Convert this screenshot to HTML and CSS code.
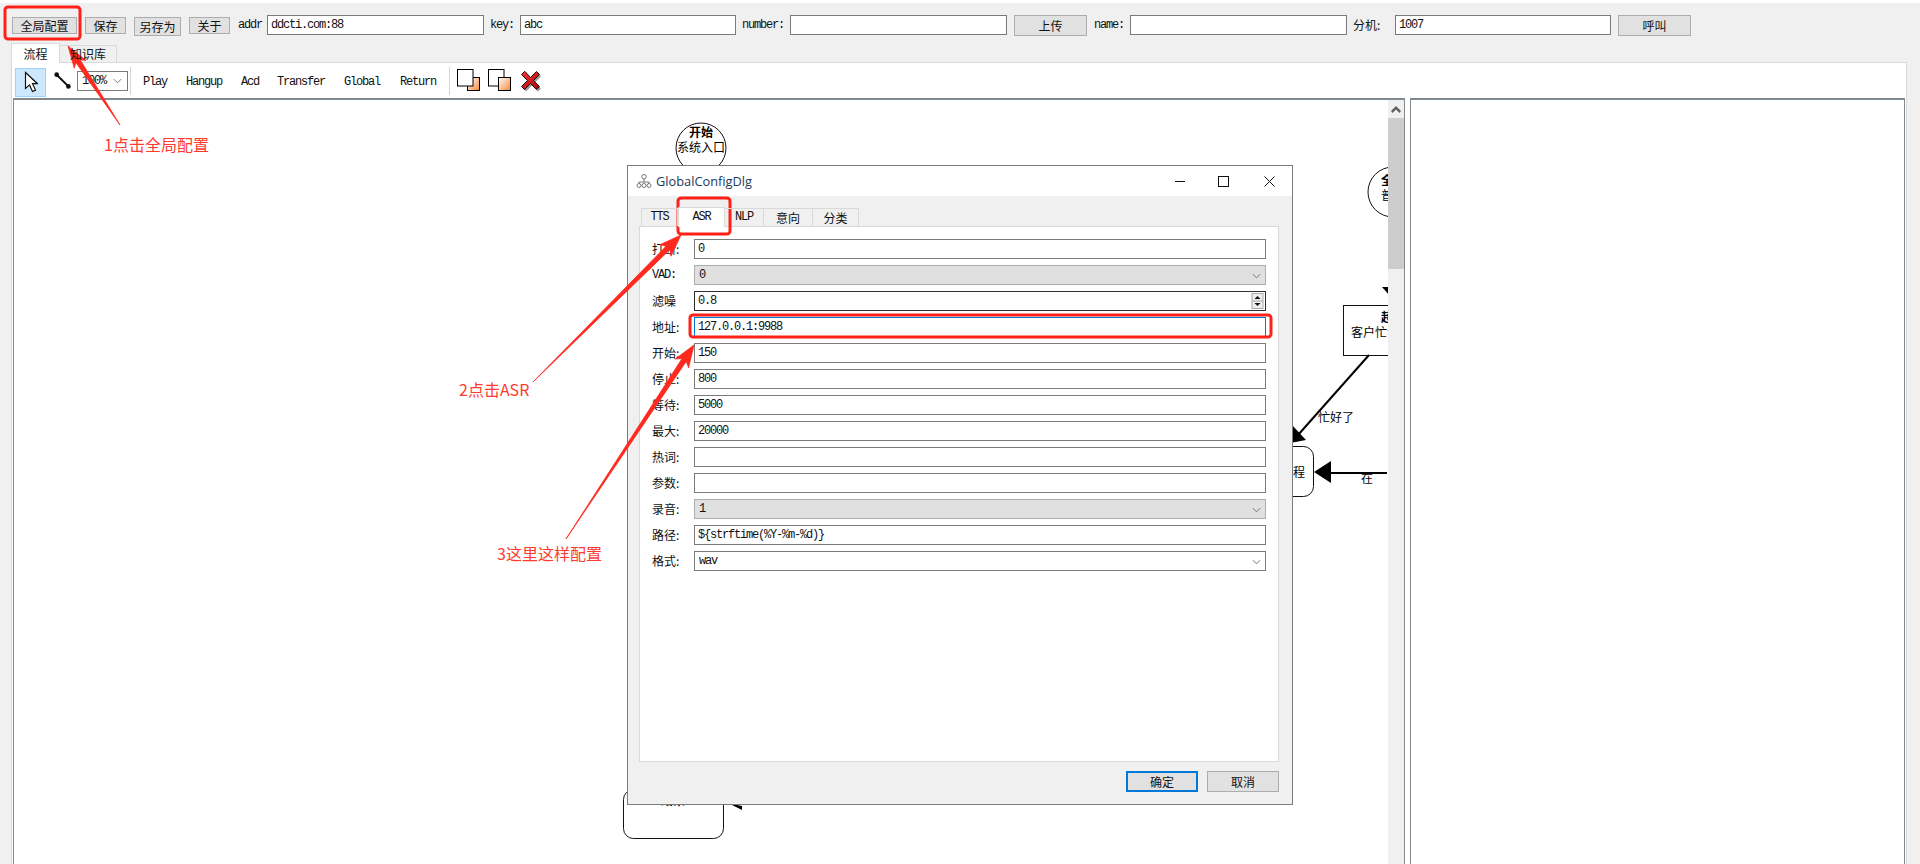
FILE: index.html
```html
<!DOCTYPE html>
<html lang="zh">
<head>
<meta charset="utf-8">
<title>GlobalConfigDlg</title>
<link rel="stylesheet" href="styles.css">
</head>
<body>
<div class="app">
  <div class="topbar">
    <button class="btn w-global">全局配置</button>
    <button class="btn w-save">保存</button>
    <button class="btn w-saveas">另存为</button>
    <button class="btn w-save">关于</button>
    <span class="lbl lat l-addr">addr</span>
    <div class="field w-addr lat">ddcti.com:88</div>
    <span class="lbl lat l-key">key:</span>
    <div class="field w-key lat">abc</div>
    <span class="lbl lat l-number">number:</span>
    <div class="field w-number"></div>
    <button class="btn btn-tall w-up">上传</button>
    <span class="lbl lat l-name">name:</span>
    <div class="field w-name"></div>
    <span class="lbl l-ext">分机:</span>
    <div class="field w-ext lat">1007</div>
    <button class="btn btn-tall w-up">呼叫</button>
  </div>
  <div class="tabs">
    <div class="tab tab-on">流程</div>
    <div class="tab tab-off">知识库</div>
  </div>
  <div class="panel">
    <div class="tools">
      <div class="tool-sel">
        <svg class="ico-cur" viewBox="0 0 14 22"><path d="M1.5 1.5v16l4-3.6 3 6.6 3-1.4-3-6.4h5z" fill="#fff" stroke="#111" stroke-width="1.2"/></svg>
      </div>
      <svg class="ico-conn" viewBox="0 0 20 20"><path d="M3 3 16 16" stroke="#111" stroke-width="2.2"/><circle cx="3" cy="3" r="2.6" fill="#111"/><circle cx="16" cy="16" r="2.6" fill="#111"/></svg>
      <div class="zoomsel"><span class="lat">100%</span><svg class="chev" viewBox="0 0 10 6"><path d="M1 1l4 4 4-4" fill="none" stroke="#666"/></svg></div>
      <i class="sep sep-a"></i>
      <span class="tool lat t-play">Play</span>
      <span class="tool lat t-hang">Hangup</span>
      <span class="tool lat t-acd">Acd</span>
      <span class="tool lat t-tran">Transfer</span>
      <span class="tool lat t-glob">Global</span>
      <span class="tool lat t-ret">Return</span>
      <i class="sep sep-b"></i>
      <svg class="ico-order" viewBox="0 0 23 23"><defs><linearGradient id="og" x1="0" y1="0" x2="1" y2="1"><stop offset="0" stop-color="#fff"/><stop offset="1" stop-color="#f58a3c"/></linearGradient></defs><rect x="10.5" y="8.5" width="12" height="13" fill="url(#og)" stroke="#000"/><rect x=".5" y=".5" width="15.500" height="16.500" fill="#fff" stroke="#000"/></svg>
      <svg class="ico-order ico-order2" viewBox="0 0 23 23"><rect x=".5" y=".5" width="15.500" height="16.500" fill="#fff" stroke="#000"/><rect x="10.5" y="8.5" width="12" height="13" fill="url(#og)" stroke="#000"/></svg>
      <svg class="ico-x" viewBox="0 0 22 22"><defs><linearGradient id="xg" x1="0" y1="0" x2="1" y2="1"><stop offset="0" stop-color="#f33"/><stop offset="1" stop-color="#a00"/></linearGradient></defs><path d="M5 2.500 11 8.500 17 2.500 20 5.500 14 11.500 20 17.500 17 20.500 11 14.500 5 20.500 2 17.500 8 11.500 2 5.500z" fill="#999" transform="translate(1 1)"/><path d="M5 1.500 10.500 7.500 16.500 1.500 19.500 4.500 13.500 10.500 19.500 16.500 16.500 19.500 10.500 13.500 4.500 19.500 1.500 16.500 7.500 10.500 1.500 4.500 4.500 1.500z" fill="url(#xg)" stroke="#111"/></svg>
    </div>
    <div class="work">
      <div class="canvas">
        <div class="paper">
          <svg class="diagram" viewBox="14 100 1374 765">
            <circle class="shape" cx="701" cy="148" r="25"/>
            <text class="dt dt-b" x="701" y="137">开始</text>
            <text class="dt" x="701" y="152">系统入口</text>
            <circle class="shape" cx="1393" cy="192" r="25"/>
            <text class="dt dt-b" x="1393" y="185">全局</text>
            <text class="dt" x="1393" y="200">普通</text>
            <path class="fillk" d="M1382 287h9v10z"/>
            <rect class="shape" x="1343.500" y="305.500" width="100" height="50"/>
            <text class="dt dt-b" x="1393" y="322">超时</text>
            <text class="dt" x="1393" y="337">客户忙请稍等待</text>
            <path class="lineb" d="M1369 355 1298 435"/>
            <path class="fillk" d="M1285 444 1292 425 1306 440z"/>
            <text class="dt dt-s" x="1318" y="422">忙好了</text>
            <rect class="shape" x="1213.500" y="446.500" width="100" height="50" rx="10"/>
            <text class="dt" x="1299" y="477">程</text>
            <path class="fillk" d="M1314 472 1331 461v22z"/>
            <path class="lineb" d="M1331 473H1387"/>
            <text class="dt dt-s" x="1361" y="483">在</text>
            <rect class="shape" x="623.500" y="789.500" width="100" height="49" rx="10"/>
            <text class="dt dt-b" x="673" y="805">结束</text>
            <path class="fillk" d="M728 803 742 806v4z"/>
          </svg>
        </div>
        <div class="vscroll">
          <div class="sb-up"><svg class="sb-arrow" viewBox="0 0 10 7"><path d="M5 0 10 5 8.500 7 5 3.500 1.500 7 0 5z" fill="#606060"/></svg></div>
          <div class="sb-thumb"></div>
        </div>
      </div>
      <div class="side"></div>
    </div>
  </div>

  <div class="dialog">
    <div class="dlg-title">
      <svg class="dlg-ico" viewBox="0 0 16 14"><g fill="none" stroke="#777"><circle cx="8" cy="2.700" r="2.200"/><path d="M8 5v3M3 10V8h10v2"/><circle cx="3" cy="11.500" r="2"/><circle cx="8" cy="11.500" r="2"/><circle cx="13" cy="11.500" r="2"/></g></svg>
      <span class="dlg-name">GlobalConfigDlg</span>
      <svg class="wc wc-min" viewBox="0 0 11 11"><path d="M0 5.500h10" stroke="#111"/></svg>
      <svg class="wc wc-max" viewBox="0 0 11 11"><rect x=".5" y=".5" width="10" height="10" fill="none" stroke="#111"/></svg>
      <svg class="wc wc-close" viewBox="0 0 11 11"><path d="M.5.500l10 10M10.500.500l-10 10" stroke="#111"/></svg>
    </div>
    <div class="dlg-body">
      <div class="dtabs">
        <div class="dtab d-tts lat">TTS</div>
        <div class="dtab dtab-on d-asr lat">ASR</div>
        <div class="dtab d-nlp lat">NLP</div>
        <div class="dtab d-yx">意向</div>
        <div class="dtab d-fl">分类</div>
      </div>
      <div class="pane">
        <div class="row"><span class="rl">打断:</span><div class="rf lat">0</div></div>
        <div class="row"><span class="rl lat">VAD:</span><div class="rf rf-combo lat">0<svg class="chev chev-r" viewBox="0 0 10 6"><path d="M1 1l4 4 4-4" fill="none" stroke="#666"/></svg></div></div>
        <div class="row"><span class="rl">滤噪</span><div class="rf rf-dark lat">0.8<div class="spin"><svg viewBox="0 0 12 16"><rect x=".5" y=".5" width="11" height="15" fill="#eee" stroke="#aaa"/><path d="M.5 8h11" stroke="#aaa"/><path d="M6 3l3 3H3zM6 13l3-3H3z" fill="#111"/></svg></div></div></div>
        <div class="row"><span class="rl">地址:</span><div class="rf rf-focus lat">127.0.0.1:9988</div></div>
        <div class="row"><span class="rl">开始:</span><div class="rf lat">150</div></div>
        <div class="row"><span class="rl">停止:</span><div class="rf lat">800</div></div>
        <div class="row"><span class="rl">等待:</span><div class="rf lat">5000</div></div>
        <div class="row"><span class="rl">最大:</span><div class="rf lat">20000</div></div>
        <div class="row"><span class="rl">热词:</span><div class="rf"></div></div>
        <div class="row"><span class="rl">参数:</span><div class="rf"></div></div>
        <div class="row"><span class="rl">录音:</span><div class="rf rf-combo lat">1<svg class="chev chev-r" viewBox="0 0 10 6"><path d="M1 1l4 4 4-4" fill="none" stroke="#666"/></svg></div></div>
        <div class="row"><span class="rl">路径:</span><div class="rf lat">${strftime(%Y-%m-%d)}</div></div>
        <div class="row"><span class="rl">格式:</span><div class="rf rf-white-combo lat">wav<svg class="chev chev-r" viewBox="0 0 10 6"><path d="M1 1l4 4 4-4" fill="none" stroke="#666"/></svg></div></div>
      </div>
      <div class="dlg-foot">
        <button class="btn dbtn dbtn-on">确定</button>
        <button class="btn dbtn">取消</button>
      </div>
    </div>
  </div>

  <svg class="notes" viewBox="0 0 1920 864">
    <rect class="nbox" x="5" y="7" width="75" height="32" rx="3"/>
    <rect class="nbox" x="678" y="198" width="52" height="36" rx="3"/>
    <rect class="nbox" x="690" y="315" width="581" height="22" rx="3"/>
    <path class="narrow" d="M68 46 85.900 60.500 80 59.600 120 125 75.800 62.400 74.300 68.200z"/>
    <path class="narrow" d="M681 235 671 256.200 670 249.500 533 382 666.400 245.900 659.800 244.800z"/>
    <path class="narrow" d="M694 345 688.600 367.800 686.200 361.400 566 539 682 358.600 675.200 359z"/>
    <text class="ntext" x="104" y="151">1点击全局配置</text>
    <text class="ntext" x="459" y="396">2点击ASR</text>
    <text class="ntext" x="497" y="560">3这里这样配置</text>
  </svg>
</div>
</body>
</html>
```

FILE: styles.css
```css
* { box-sizing: border-box; }
html, body { margin: 0; height: 100%; overflow: hidden; background: #fff; }
body {
  padding-top: 3px;
  font: 12px/1 "Noto Sans CJK SC", "Liberation Sans", sans-serif;
  color: #111;
}
.app { position: relative; height: 861px; background: #f0f0f0; }
.lat { font-family: "Liberation Mono", "Noto Sans CJK SC", monospace; font-size: 12px; letter-spacing: -1.2px; }

/* top bar */
.topbar { display: flex; align-items: flex-start; height: 40px; padding: 12px 0 0 12px; }
.btn {
  height: 17px; padding: 0; border: 1px solid #adadad; background: #e1e1e1; color: #111;
  font: inherit; margin: 2px 8px 0 0; line-height: 14px;
}
.btn-tall { height: 21px; margin: 0; }
.w-global { width: 65px; }
.w-save { width: 41px; }
.w-saveas { width: 47px; height: 19px; margin-top: 2px; }
.lbl { line-height: 20px; white-space: nowrap; }
.field {
  height: 20px; border: 1px solid #7a7a7a; background: #fff; padding: 0 3px; line-height: 18px; white-space: nowrap;
}
.l-addr { width: 29px; }
.w-addr { width: 217px; margin-right: 6px; }
.l-key { width: 30px; }
.w-key { width: 216px; margin-right: 6px; }
.l-number { width: 48px; }
.w-number { width: 217px; margin-right: 7px; }
.w-up { width: 73px; }
.topbar .w-up { margin-right: 7px; }
.l-name { width: 36px; }
.w-name { width: 217px; margin-right: 6px; }
.l-ext { width: 42px; }
.w-ext { width: 216px; margin-right: 7px; }

/* tabs */
.tabs { display: flex; align-items: flex-end; height: 19px; padding-left: 11px; position: relative; z-index: 1; }
.tab { text-align: center; border: 1px solid #d9d9d9; border-bottom: 0; }
.tab-on { width: 49px; height: 20px; margin-bottom: -1px; background: #fff; line-height: 20px; }
.tab-off { width: 57px; height: 17px; line-height: 16px; border-left: 0; }

/* panel */
.panel { margin-left: 11px; width: 1896px; height: 810px; border: 1px solid #d9d9d9; background: #fff; }
.tools { display: flex; align-items: center; height: 35px; padding-left: 3px; position: relative; }
.tool-sel { width: 31px; height: 29px; margin-top: 3px; background: #cce8ff; border: 1px solid #99d1ff; display: flex; align-items: center; justify-content: center; }
.ico-cur { width: 14px; height: 22px; }
.ico-conn { width: 18px; height: 18px; margin: 0 0 0 8px; }
.zoomsel { width: 51px; height: 20px; margin-left: 5px; border: 1px solid #7a7a7a; display: flex; align-items: center; justify-content: space-between; padding: 0 5px 0 4px; }
.chev { width: 9px; height: 6px; }
.sep { width: 1px; height: 28px; background: #d4d4d4; }
.sep-a { margin-left: 2px; }
.sep-b { margin-left: 13px; }
.tool { white-space: nowrap; padding-top: 3px; }
.t-play { margin-left: 12px; width: 43px; }
.t-hang { width: 55px; }
.t-acd { width: 36px; }
.t-tran { width: 67px; }
.t-glob { width: 56px; }
.t-ret { width: 36px; }
.ico-order { width: 23px; height: 23px; margin-left: 7px; }
.ico-order2 { margin-left: 8px; }
.ico-x { width: 22px; height: 22px; margin-left: 9px; }

/* work area */
.work { display: flex; gap: 5px; height: 775px; padding-left: 1px; }
.canvas { width: 1392px; height: 100%; display: flex; border: 1px solid #808890; border-width: 2px 1px 0 1px; background: #fff; }
.paper { position: relative; width: 1374px; height: 100%; overflow: hidden; }
.diagram { display: block; width: 1374px; height: 765px; }
.shape { fill: #fff; stroke: #111; stroke-width: 1; }
.fillk { fill: #000; }
.lineb { stroke: #000; stroke-width: 2; fill: none; }
.dt { font: 12px "Noto Sans CJK SC", sans-serif; fill: #000; text-anchor: middle; }
.dt-b { font-weight: 700; }
.dt-s { text-anchor: start; }
.vscroll { width: 16px; height: 100%; background: #f0f0f0; }
.sb-up { height: 18px; display: flex; align-items: center; justify-content: center; }
.sb-arrow { width: 10px; height: 7px; }
.sb-thumb { height: 151px; background: #cdcdcd; }
.side { width: 495px; height: 100%; border: 1px solid #808890; border-width: 2px 1px 0 1px; background: #fff; }

/* dialog */
.dialog { position: absolute; left: 627px; top: 162px; width: 666px; height: 640px; border: 1px solid #7a7a7a; background: #f0f0f0; display: flex; flex-direction: column; }
.dlg-title { height: 30px; background: #fff; display: flex; align-items: center; padding-left: 8px; }
.dlg-ico { width: 16px; height: 14px; }
.dlg-name { margin-left: 4px; font: 12.8px "Open Sans", "Noto Sans", sans-serif; color: #1d3a5c; width: 517px; }
.wc { width: 11px; height: 11px; }
.wc-min { margin-left: 2px; }
.wc-max { margin-left: 32px; }
.wc-close { margin-left: 35px; }
.dlg-body { flex: 1; padding-left: 11px; position: relative; }
.dtabs { display: flex; align-items: flex-end; height: 30px; padding-left: 2px; position: relative; z-index: 1; }
.dtab { height: 18px; border: 1px solid #d9d9d9; border-bottom: 0; border-left: 0; text-align: center; line-height: 17px; }
.d-tts { width: 37px; border-left: 1px solid #d9d9d9; }
.dtab-on { height: 20px; margin-bottom: -1px; background: #fff; line-height: 18px; border-left: 1px solid #d9d9d9; }
.d-asr { width: 47px; }
.d-nlp { width: 39px; }
.d-yx { width: 49px; }
.d-fl { width: 46px; }
.pane { width: 640px; height: 536px; background: #fff; border: 1px solid #d9d9d9; padding: 12px 0 0 12px; display: flex; flex-direction: column; gap: 6px; }
.row { display: flex; align-items: center; height: 20px; }
.rl { width: 42px; font-size: 12px; }
.rf { position: relative; width: 572px; height: 20px; border: 1px solid #7a7a7a; background: #fff; padding: 0 3px; line-height: 18px; }
.rf-combo { background: #e0e0e0; border-color: #adadad; padding-left: 4px; }
.rf-white-combo { padding-left: 4px; }
.rf-dark { border-color: #2f2f2f; }
.rf-focus { border-color: #0078d7; }
.chev-r { position: absolute; right: 4px; top: 7px; }
.spin { position: absolute; right: 1px; top: 1px; width: 13px; height: 16px; }
.spin svg { display: block; width: 13px; height: 16px; }
.dlg-foot { display: flex; justify-content: flex-end; gap: 9px; padding: 9px 0 0 0; width: 640px; }
.dbtn { width: 72px; height: 21px; margin: 0; line-height: 18px; }
.dbtn-on { border: 2px solid #0078d7; }

/* annotations */
.notes { position: absolute; left: 0; top: -3px; width: 1920px; height: 864px; pointer-events: none; }
.nbox { fill: none; stroke: #ff2018; stroke-width: 3; }
.narrow { fill: #ff2a1f; stroke: #ff2a1f; stroke-width: .8; }
.ntext { font: 16px "Noto Sans CJK SC", sans-serif; fill: #ff3b30; }
```
